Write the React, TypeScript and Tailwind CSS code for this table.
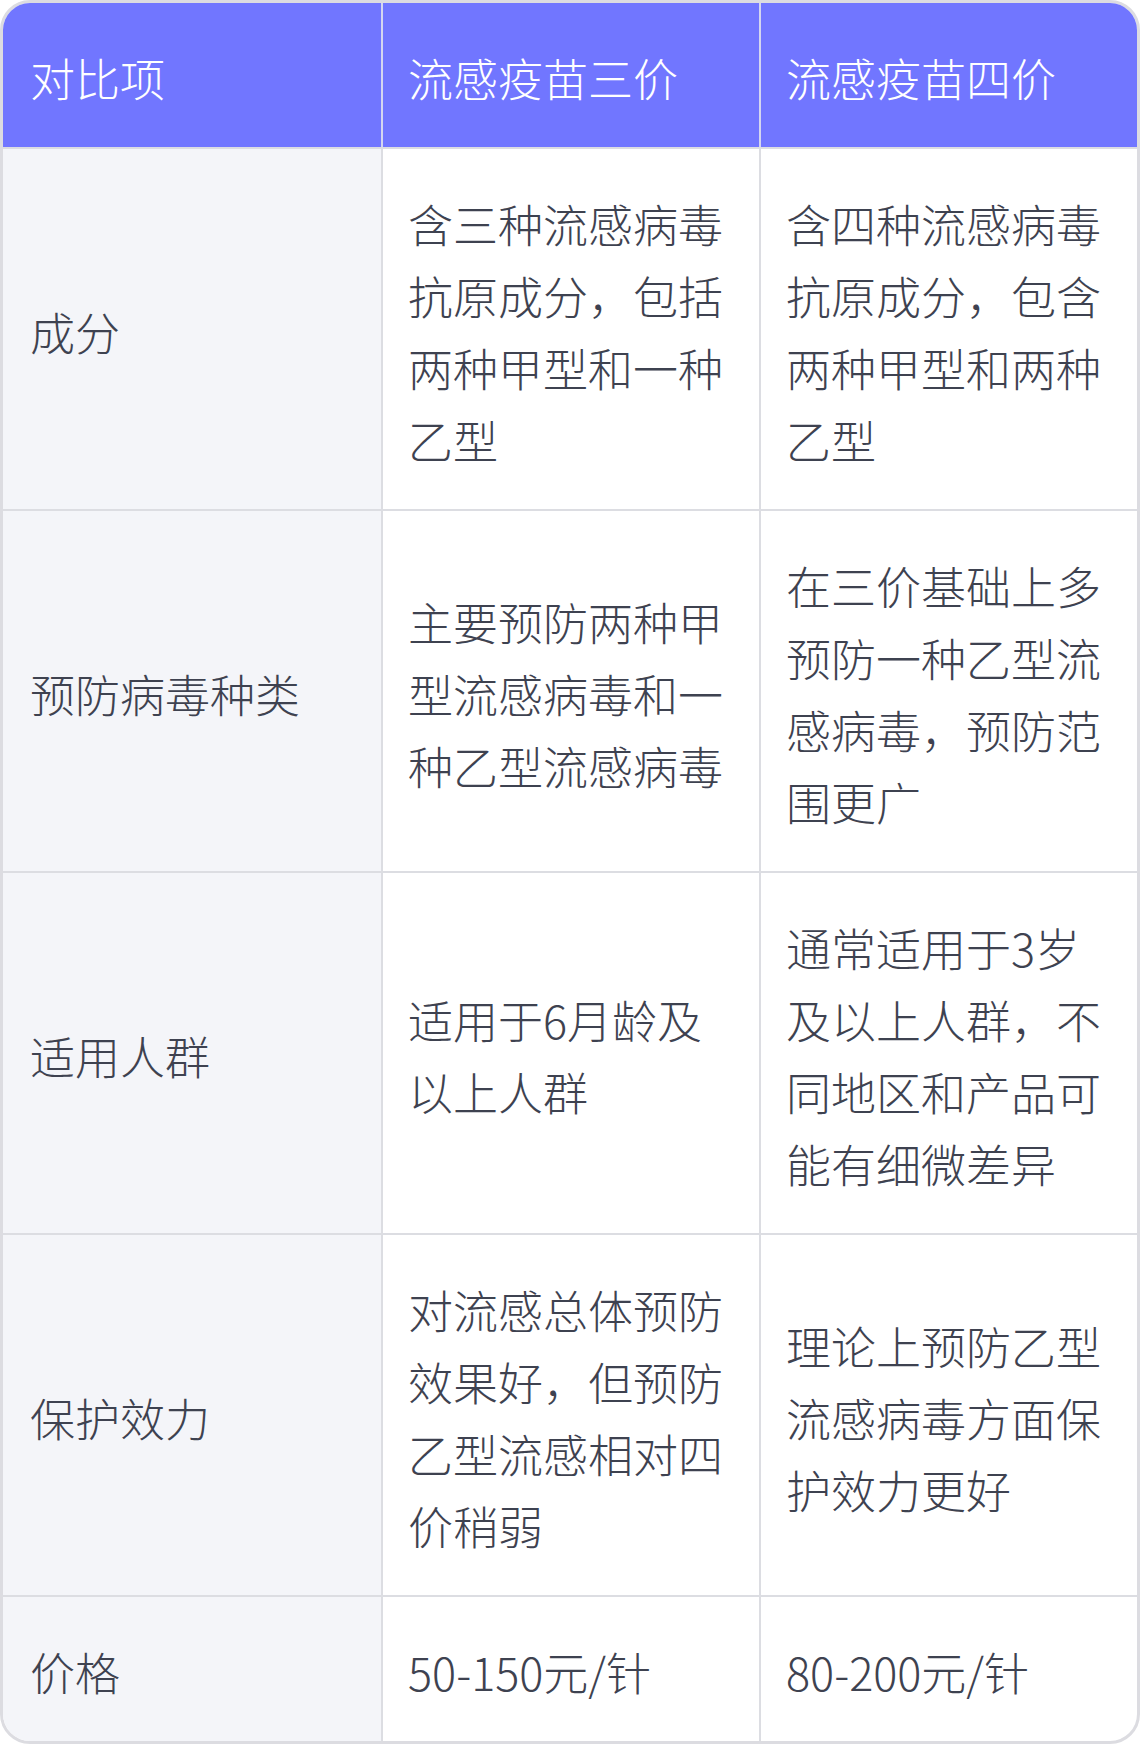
const rows = [
  {
    label: "成分",
    tri: "含三种流感病毒抗原成分，包括两种甲型和一种乙型",
    quad: "含四种流感病毒抗原成分，包含两种甲型和两种乙型",
  },
  {
    label: "预防病毒种类",
    tri: "主要预防两种甲型流感病毒和一种乙型流感病毒",
    quad: "在三价基础上多预防一种乙型流感病毒，预防范围更广",
  },
  {
    label: "适用人群",
    tri: "适用于6月龄及以上人群",
    quad: "通常适用于3岁及以上人群，不同地区和产品可能有细微差异",
  },
  {
    label: "保护效力",
    tri: "对流感总体预防效果好，但预防乙型流感相对四价稍弱",
    quad: "理论上预防乙型流感病毒方面保护效力更好",
  },
  {
    label: "价格",
    tri: "50-150元/针",
    quad: "80-200元/针",
  },
];

export default function App() {
  return (
    <div className="w-[1140px] bg-white font-['Noto_Sans_CJK_SC',sans-serif] font-light">
      <div className="overflow-hidden rounded-[30px] border-[3px] border-[#dcdce1]">
        {/* header */}
        <div className="grid grid-cols-3 bg-[#7176ff] text-white text-[45px] leading-[72px]">
          <div className="pl-[27px] pr-[25px] pt-[39px] pb-[33px]">对比项</div>
          <div className="border-l-2 border-[#d4d6f0] pl-[25px] pr-[27px] pt-[39px] pb-[33px]">流感疫苗三价</div>
          <div className="border-l-2 border-[#d4d6f0] pl-[25px] pr-[27px] pt-[39px] pb-[33px]">流感疫苗四价</div>
        </div>

        {rows.map((r) => (
          <div
            key={r.label}
            className="grid grid-cols-3 border-t-2 border-[#dcdde2] text-[45px] leading-[72px] text-[#3e4250]"
          >
            <div className="flex items-center bg-[#f4f5f9] pl-[27px] pr-[25px] pt-[39px] pb-[33px]">{r.label}</div>
            <div className="flex items-center border-l-2 border-[#dcdde2] pl-[25px] pr-[27px] pt-[39px] pb-[33px]">{r.tri}</div>
            <div className="flex items-center border-l-2 border-[#dcdde2] pl-[25px] pr-[27px] pt-[39px] pb-[33px]">{r.quad}</div>
          </div>
        ))}
      </div>
    </div>
  );
}
